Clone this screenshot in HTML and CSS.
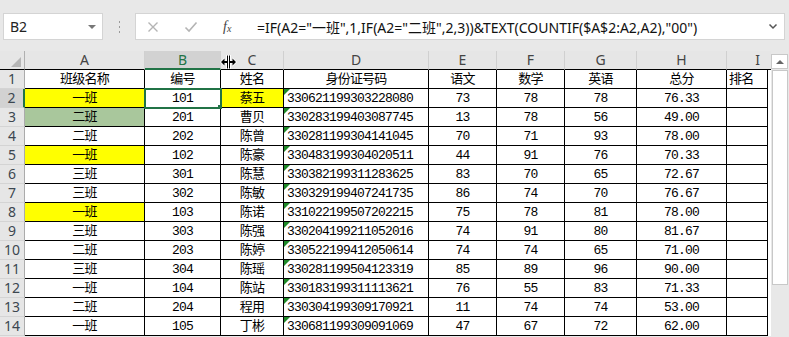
FILE: index.html
```html
<!DOCTYPE html>
<html lang="zh-CN">
<head>
    <meta charset="UTF-8">
    <title>成绩表</title>
    <link rel="stylesheet" href="styles.css">
</head>
<body>
    <div class="formula-row">
        <div class="name-box"><span>B2</span><span class="caret"></span></div>
        <div class="grip">
            <svg width="3" height="13" viewBox="0 0 3 13"><rect x="1" y="1" width="1" height="2" fill="#9a9a9a"/><rect x="1" y="6" width="1" height="2" fill="#9a9a9a"/><rect x="1" y="11" width="1" height="2" fill="#9a9a9a"/></svg>
        </div>
        <div class="formula-box">
            <div class="fx-buttons">
                <svg class="btn" width="12" height="12" viewBox="0 0 12 12"><path d="M1.5 1.5 L10.5 10.5 M10.5 1.5 L1.5 10.5" stroke="#b4b4b4" stroke-width="1.4" fill="none"/></svg>
                <svg class="btn" width="14" height="12" viewBox="0 0 14 12"><path d="M1.5 6.5 L5 10 L12.5 1.5" stroke="#b4b4b4" stroke-width="1.6" fill="none"/></svg>
                <span class="fx">f<sub>x</sub></span>
            </div>
            <div class="formula-text">=IF(A2="一班",1,IF(A2="二班",2,3))&amp;TEXT(COUNTIF($A$2:A2,A2),"00")</div>
            <svg class="expand" width="10" height="7" viewBox="0 0 10 7"><path d="M1.5 1.5 L5 5 L8.5 1.5" stroke="#555" stroke-width="1.5" fill="none"/></svg>
        </div>
    </div>

    <div class="sheet-area">
        <div class="sheet">
            <div class="hd corner"><span class="corner-mark"></span></div>
            <div class="hd">A</div>
            <div class="hd selected">B</div>
            <div class="hd">C</div>
            <div class="hd">D</div>
            <div class="hd">E</div>
            <div class="hd">F</div>
            <div class="hd">G</div>
            <div class="hd">H</div>
            <div class="hd col-i">I</div>
            <div class="hd pad"></div>

            <div class="rh">1</div>
            <div class="c top">班级名称</div><div class="c top">编号</div><div class="c top">姓名</div><div class="c top">身份证号码</div><div class="c top">语文</div><div class="c top">数学</div><div class="c top">英语</div><div class="c top">总分</div><div class="c top left">排名</div><div class="pad"></div>

            <div class="rh selected">2</div>
            <div class="c yel">一班</div><div class="c active">101</div><div class="c yel">蔡五</div><div class="c id">330621199303228080</div><div class="c">73</div><div class="c">78</div><div class="c">78</div><div class="c">76.33</div><div class="c"></div><div class="pad"></div>

            <div class="rh">3</div>
            <div class="c grn">二班</div><div class="c">201</div><div class="c">曹贝</div><div class="c id">330283199403087745</div><div class="c">13</div><div class="c">78</div><div class="c">56</div><div class="c">49.00</div><div class="c"></div><div class="pad"></div>

            <div class="rh">4</div>
            <div class="c">二班</div><div class="c">202</div><div class="c">陈曾</div><div class="c id">330281199304141045</div><div class="c">70</div><div class="c">71</div><div class="c">93</div><div class="c">78.00</div><div class="c"></div><div class="pad"></div>

            <div class="rh">5</div>
            <div class="c yel">一班</div><div class="c">102</div><div class="c">陈豪</div><div class="c id">330483199304020511</div><div class="c">44</div><div class="c">91</div><div class="c">76</div><div class="c">70.33</div><div class="c"></div><div class="pad"></div>

            <div class="rh">6</div>
            <div class="c">三班</div><div class="c">301</div><div class="c">陈慧</div><div class="c id">330382199311283625</div><div class="c">83</div><div class="c">70</div><div class="c">65</div><div class="c">72.67</div><div class="c"></div><div class="pad"></div>

            <div class="rh">7</div>
            <div class="c">三班</div><div class="c">302</div><div class="c">陈敏</div><div class="c id">330329199407241735</div><div class="c">86</div><div class="c">74</div><div class="c">70</div><div class="c">76.67</div><div class="c"></div><div class="pad"></div>

            <div class="rh">8</div>
            <div class="c yel">一班</div><div class="c">103</div><div class="c">陈诺</div><div class="c id">331022199507202215</div><div class="c">75</div><div class="c">78</div><div class="c">81</div><div class="c">78.00</div><div class="c"></div><div class="pad"></div>

            <div class="rh">9</div>
            <div class="c">三班</div><div class="c">303</div><div class="c">陈强</div><div class="c id">330204199211052016</div><div class="c">74</div><div class="c">91</div><div class="c">80</div><div class="c">81.67</div><div class="c"></div><div class="pad"></div>

            <div class="rh">10</div>
            <div class="c">二班</div><div class="c">203</div><div class="c">陈婷</div><div class="c id">330522199412050614</div><div class="c">74</div><div class="c">74</div><div class="c">65</div><div class="c">71.00</div><div class="c"></div><div class="pad"></div>

            <div class="rh">11</div>
            <div class="c">三班</div><div class="c">304</div><div class="c">陈瑶</div><div class="c id">330281199504123319</div><div class="c">85</div><div class="c">89</div><div class="c">96</div><div class="c">90.00</div><div class="c"></div><div class="pad"></div>

            <div class="rh">12</div>
            <div class="c">一班</div><div class="c">104</div><div class="c">陈站</div><div class="c id">330183199311113621</div><div class="c">76</div><div class="c">55</div><div class="c">83</div><div class="c">71.33</div><div class="c"></div><div class="pad"></div>

            <div class="rh">13</div>
            <div class="c">二班</div><div class="c">204</div><div class="c">程用</div><div class="c id">330304199309170921</div><div class="c">11</div><div class="c">74</div><div class="c">74</div><div class="c">53.00</div><div class="c"></div><div class="pad"></div>

            <div class="rh">14</div>
            <div class="c">一班</div><div class="c">105</div><div class="c">丁彬</div><div class="c id">330681199309091069</div><div class="c">47</div><div class="c">67</div><div class="c">72</div><div class="c">62.00</div><div class="c"></div><div class="pad"></div>
        </div>

        <div class="vscroll">
            <div class="scroll-up"><span class="up-arrow"></span></div>
            <div class="thumb"></div>
        </div>

        <!-- column resize cursor hovering over the B|C border -->
        <svg class="cursor" width="17" height="14" viewBox="0 0 17 14">
            <path d="M0 7 L4.5 2.5 V5.5 H6 V0 H11 V5.5 H12.5 V2.5 L17 7 L12.5 11.5 V8.5 H11 V14 H6 V8.5 H4.5 V11.5 Z" fill="#fff"/>
            <path d="M1 7 L4.5 3.5 V6 H7 V0.5 H8 V13.5 H7 V8 H4.5 V10.5 Z" fill="#000"/>
            <path d="M16 7 L12.5 3.5 V6 H10 V0.5 H9 V13.5 H10 V8 H12.5 V10.5 Z" fill="#000"/>
        </svg>
    </div>
</body>
</html>
```

FILE: styles.css
```css
body {
  margin: 0;
  background-color: #e8e8e8;
  font-family: 'Noto Sans', 'Noto Sans CJK SC', sans-serif;
  overflow: hidden;
}

/* Formula bar */
.formula-row {
  height: 51px;
  box-sizing: border-box;
  padding: 13px 4px 0 3px;
  display: flex;
  align-items: flex-start;
}

.name-box {
  width: 100px;
  height: 27px;
  box-sizing: border-box;
  background-color: #fff;
  border: 1px solid #d4d4d4;
  display: flex;
  align-items: center;
  justify-content: space-between;
  padding: 0 6px 0 6px;
  font-size: 14px;
  color: #222;
}

.caret {
  width: 0;
  height: 0;
  border-left: 4px solid transparent;
  border-right: 4px solid transparent;
  border-top: 4px solid #777;
}

.grip {
  width: 32px;
  height: 27px;
  display: flex;
  align-items: center;
  justify-content: center;
}

.formula-box {
  flex: 1;
  height: 27px;
  box-sizing: border-box;
  background-color: #fff;
  border: 1px solid #d4d4d4;
  display: flex;
  align-items: center;
}

.fx-buttons {
  width: 121px;
  display: flex;
  align-items: center;
  padding-left: 11px;
  box-sizing: border-box;
  gap: 25px;
}

.fx {
  font-family: 'Liberation Serif', serif;
  font-style: italic;
  font-size: 14px;
  color: #444;
  line-height: 1;
}

.fx sub {
  font-size: 10px;
  vertical-align: -1px;
}

.formula-text {
  flex: 1;
  font-size: 14px;
  color: #111;
  white-space: nowrap;
  overflow: hidden;
}

.expand {
  margin: 0 6px 0 4px;
}

/* Sheet */
.sheet-area {
  position: relative;
  display: flex;
}

.sheet {
  width: 771px;
  display: grid;
  grid-template-columns: 25px 120px 76px 63px 145px 68px 68px 72px 90px 41px 3px;
  grid-auto-rows: 19px;
  background-color: #fff;
}

.hd {
  background-color: #e6e6e6;
  border-right: 1px solid #d0d0d0;
  border-bottom: 1px solid #000;
  font-size: 14px;
  color: #444;
  display: flex;
  align-items: center;
  justify-content: center;
  line-height: 1;
}

.hd.corner {
  position: relative;
  border-right: 1px solid #b0b0b0;
}

.corner-mark {
  position: absolute;
  right: 3px;
  bottom: 2px;
  width: 0;
  height: 0;
  border-left: 10px solid transparent;
  border-bottom: 10px solid #b6b6b6;
}

.hd.col-i {
  justify-content: flex-end;
  padding-right: 8px;
  border-right: none;
}

.hd.pad {
  border-right: none;
}

.hd.selected {
  background-color: #d2d2d2;
  color: #217346;
  border-bottom: 2px solid #217346;
}

.rh {
  background-color: #e6e6e6;
  border-right: 1px solid #ababab;
  border-bottom: 1px solid #d4d4d4;
  font-size: 14px;
  color: #3c4650;
  display: flex;
  align-items: center;
  justify-content: center;
  line-height: 1;
}

.rh.selected {
  background-color: #d2d2d2;
  border-right: 2px solid #217346;
}

.c {
  border-right: 1px solid #000;
  border-bottom: 1px solid #000;
  font-family: 'Liberation Mono', 'Noto Sans CJK SC', monospace;
  font-size: 13px;
  letter-spacing: -0.8px;
  color: #000;
  display: flex;
  align-items: center;
  justify-content: center;
  white-space: nowrap;
  overflow: hidden;
  line-height: 1;
}

.c.left {
  justify-content: flex-start;
  padding-left: 2px;
}

.c.yel {
  background-color: #ffff00;
}

.c.grn {
  background-color: #a9c79c;
}

/* numbers stored as text: left aligned with the green marker */
.c.id {
  position: relative;
  justify-content: flex-start;
  padding-left: 3px;
}

.c.id::before {
  content: '';
  position: absolute;
  top: 0;
  left: 0;
  width: 0;
  height: 0;
  border-top: 6px solid #1f8a28;
  border-right: 6px solid transparent;
}

.c.active {
  position: relative;
  outline: 2px solid #217346;
  outline-offset: -1px;
}

.c.active::after {
  content: '';
  position: absolute;
  right: -4px;
  bottom: -4px;
  width: 5px;
  height: 5px;
  background-color: #217346;
  border: 1px solid #fff;
}

/* Vertical scrollbar */
.vscroll {
  width: 18px;
  background-color: #e8e8e8;
  display: flex;
  flex-direction: column;
  align-items: flex-start;
  padding-top: 3px;
}

.scroll-up {
  width: 17px;
  height: 15px;
  box-sizing: border-box;
  background-color: #fff;
  border: 1px solid #c8c8c8;
  display: flex;
  align-items: center;
  justify-content: center;
}

.up-arrow {
  width: 0;
  height: 0;
  border-left: 4px solid transparent;
  border-right: 4px solid transparent;
  border-bottom: 4px solid #666;
}

.thumb {
  width: 16px;
  height: 215px;
  box-sizing: border-box;
  margin-left: 1px;
  margin-top: 1px;
  background-color: #fff;
  border: 1px solid #c8c8c8;
}

.cursor {
  position: absolute;
  left: 220px;
  top: 4px;
}
```
